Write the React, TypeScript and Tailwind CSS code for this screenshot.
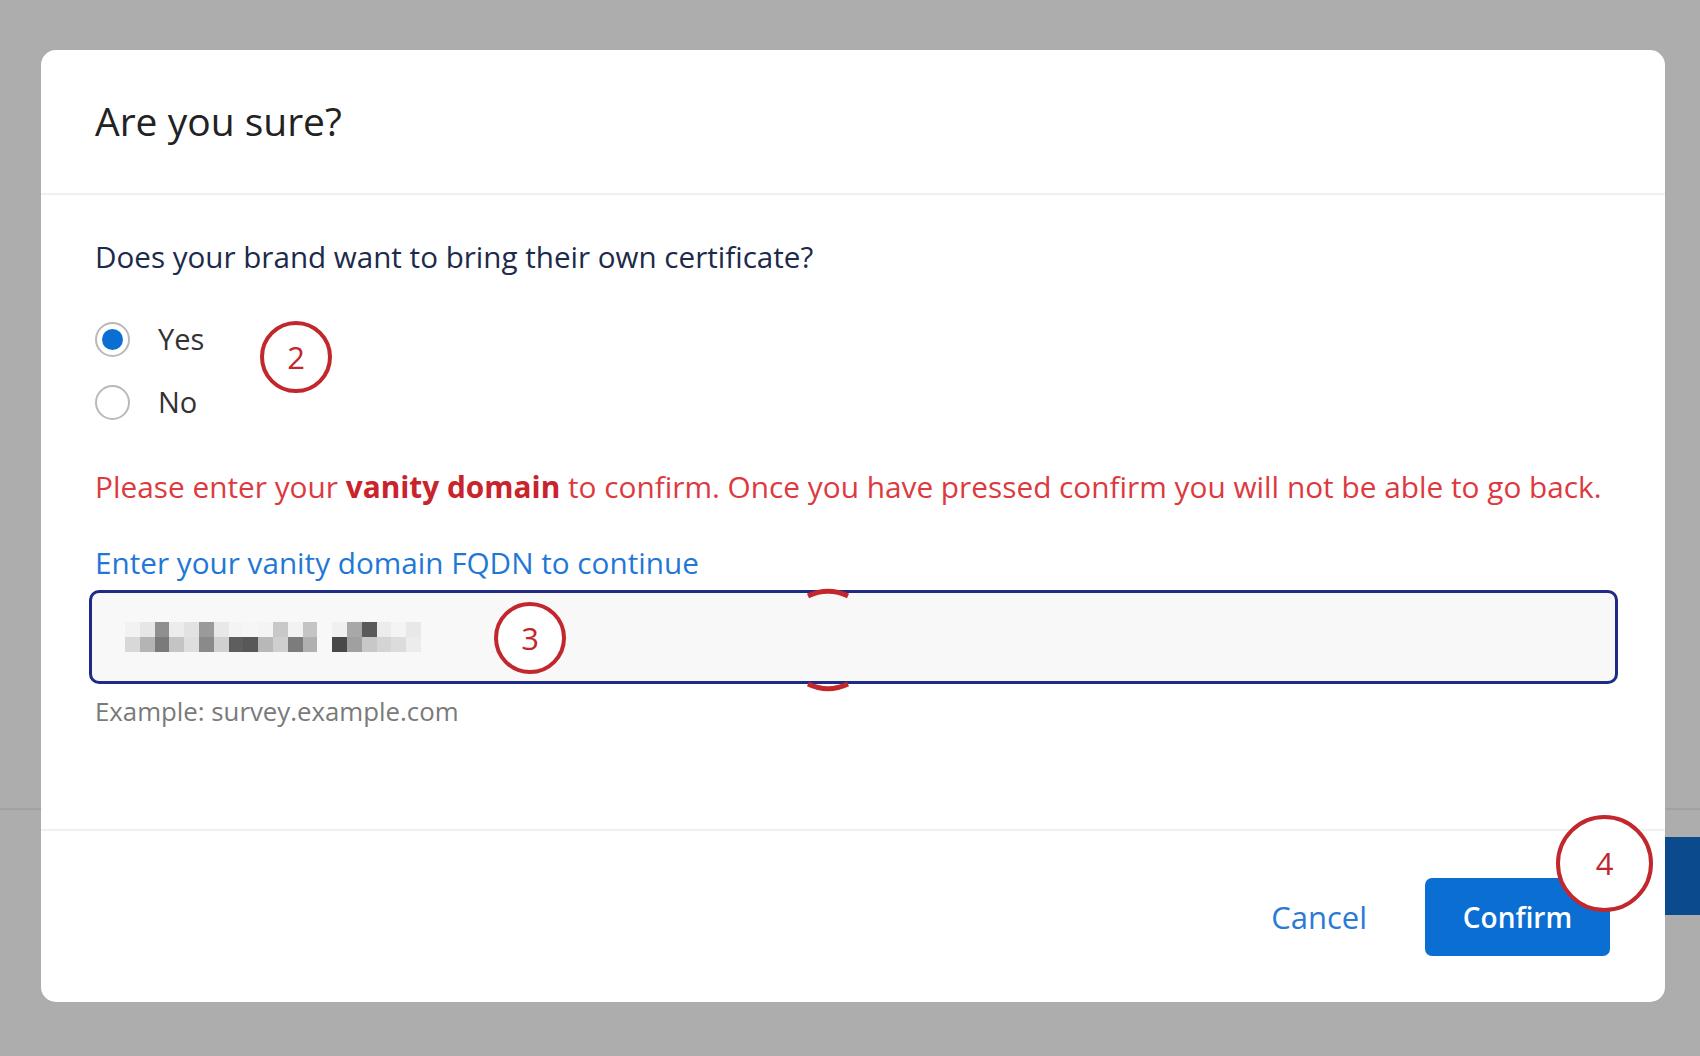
const FONT = { fontFamily: '"Open Sans", "Noto Sans", Arial, sans-serif' }

// pixelated (redacted) domain value shown inside the input
const TOP_ROW = ['#f2f2f2', '#e6e6e6', '#8f8f8f', '#ececec', '#e2e2e2', '#9a9a9a', '#e8e8e8', '#f4f4f4', '#f6f6f6', '#f4f4f4', '#c8c8c8', '#f2f2f2', '#c4c4c4', '#f8f8f8', '#f0f0f0', '#a8a8a8', '#5a5a5a', '#ececec', '#f4f4f4', '#e8e8e8']
const BOTTOM_ROW = ['#d8d8d8', '#b4b4b4', '#7a7a7a', '#c4c4c4', '#dedede', '#8a8a8a', '#d0d0d0', '#5e5e5e', '#585858', '#b8b8b8', '#cfcfcf', '#7c7c7c', '#b0b0b0', '#f8f8f8', '#484848', '#a0a0a0', '#c8c8c8', '#d4d4d4', '#dcdcdc', '#ececec']

function Marker({ n, size }: { n: number; size: number }) {
  return (
    <div
      className="flex items-center justify-center rounded-full border-[4px] border-[#c1272d] bg-white text-[31px] text-[#c1272d]"
      style={{ width: size, height: size }}
    >
      {n}
    </div>
  )
}

function Radio({ label, checked }: { label: string; checked?: boolean }) {
  return (
    <div className="flex h-[44px] items-center">
      <div className="flex h-[35px] w-[35px] items-center justify-center rounded-full border-2 border-[#b9b9b9] bg-white">
        {checked && <div className="h-[21px] w-[21px] rounded-full bg-[#0b6ed3]" />}
      </div>
      <span className="ml-[28px] text-[29px] text-[#333333]">{label}</span>
    </div>
  )
}

export default function App() {
  return (
    <div className="relative h-[1056px] w-[1700px] overflow-hidden bg-[#adadad]" style={FONT}>
      {/* page behind the overlay */}
      <div className="absolute left-0 right-0 top-[808px] h-[2px] bg-[#a2a2a2]" />
      <div className="absolute right-0 top-[837px] h-[78px] w-[36px] bg-[#0c4a8e]" />

      <div className="relative ml-[41px] mt-[50px] flex h-[952px] w-[1624px] flex-col rounded-[15px] bg-white">
        {/* Header */}
        <div className="flex h-[145px] items-center border-b-2 border-[#f0f0f0] px-[54px]">
          <h1 className="text-[39px] text-[#222222]">Are you sure?</h1>
        </div>

        {/* Body */}
        <div className="flex-1 px-[54px] pt-[42px]">
          <p className="text-[29.6px] leading-[40px] text-[#1c2a4c]">Does your brand want to bring their own certificate?</p>

          <div className="relative mt-[40px] flex flex-col gap-[19px]">
            <Radio label="Yes" checked />
            <Radio label="No" />
            <div className="absolute left-[165px] top-[4px]">
              <Marker n={2} size={72} />
            </div>
          </div>

          <p className="mt-[43px] whitespace-nowrap text-[29.8px] leading-[40px] text-[#dc3a40]">
            Please enter your <span className="font-bold text-[#c9232c]">vanity domain</span> to confirm. Once you have pressed confirm you will not be able to go back.
          </p>

          <label className="mt-[36px] block text-[29.7px] leading-[40px] text-[#1f78d6]">Enter your vanity domain FQDN to continue</label>

          <div className="relative -ml-[6px] mt-[7px] flex h-[94px] w-[1529px] items-center rounded-[10px] border-[3px] border-[#1e2a86] bg-[#f8f8f8] pl-[33px]">
            <div className="flex flex-col">
              <div className="flex">
                {TOP_ROW.map((c, i) => (
                  <div key={i} className="h-[15px] w-[14.8px]" style={{ background: c }} />
                ))}
              </div>
              <div className="flex">
                {BOTTOM_ROW.map((c, i) => (
                  <div key={i} className="h-[15px] w-[14.8px]" style={{ background: c }} />
                ))}
              </div>
            </div>
            <div className="absolute left-[402px] top-[9px]">
              <Marker n={3} size={72} />
            </div>
            {/* edges of a marker hidden behind the input */}
            <svg className="absolute left-[706px] top-[-5px]" width="60" height="104" viewBox="0 0 60 104">
              <path d="M10 8 A47 47 0 0 1 50 8" fill="none" stroke="#c1272d" strokeWidth="5" />
              <path d="M10 96 A47 47 0 0 0 50 96" fill="none" stroke="#c1272d" strokeWidth="5" />
            </svg>
          </div>

          <p className="mt-[10px] text-[25.8px] leading-[34px] text-[#7a7a7a]">Example: survey.example.com</p>
        </div>

        {/* Footer */}
        <div className="relative flex h-[173px] items-center justify-end gap-[58px] border-t-2 border-[#f0f0f0] pr-[55px] pt-[1px]">
          <button className="text-[31px] text-[#2b7bd6]">Cancel</button>
          <button className="h-[78px] w-[185px] rounded-[7px] bg-[#0b6ed3] text-[28px] font-semibold text-white">Confirm</button>
          <div className="absolute right-[12px] top-[-16px]">
            <Marker n={4} size={97} />
          </div>
        </div>
      </div>
    </div>
  )
}
